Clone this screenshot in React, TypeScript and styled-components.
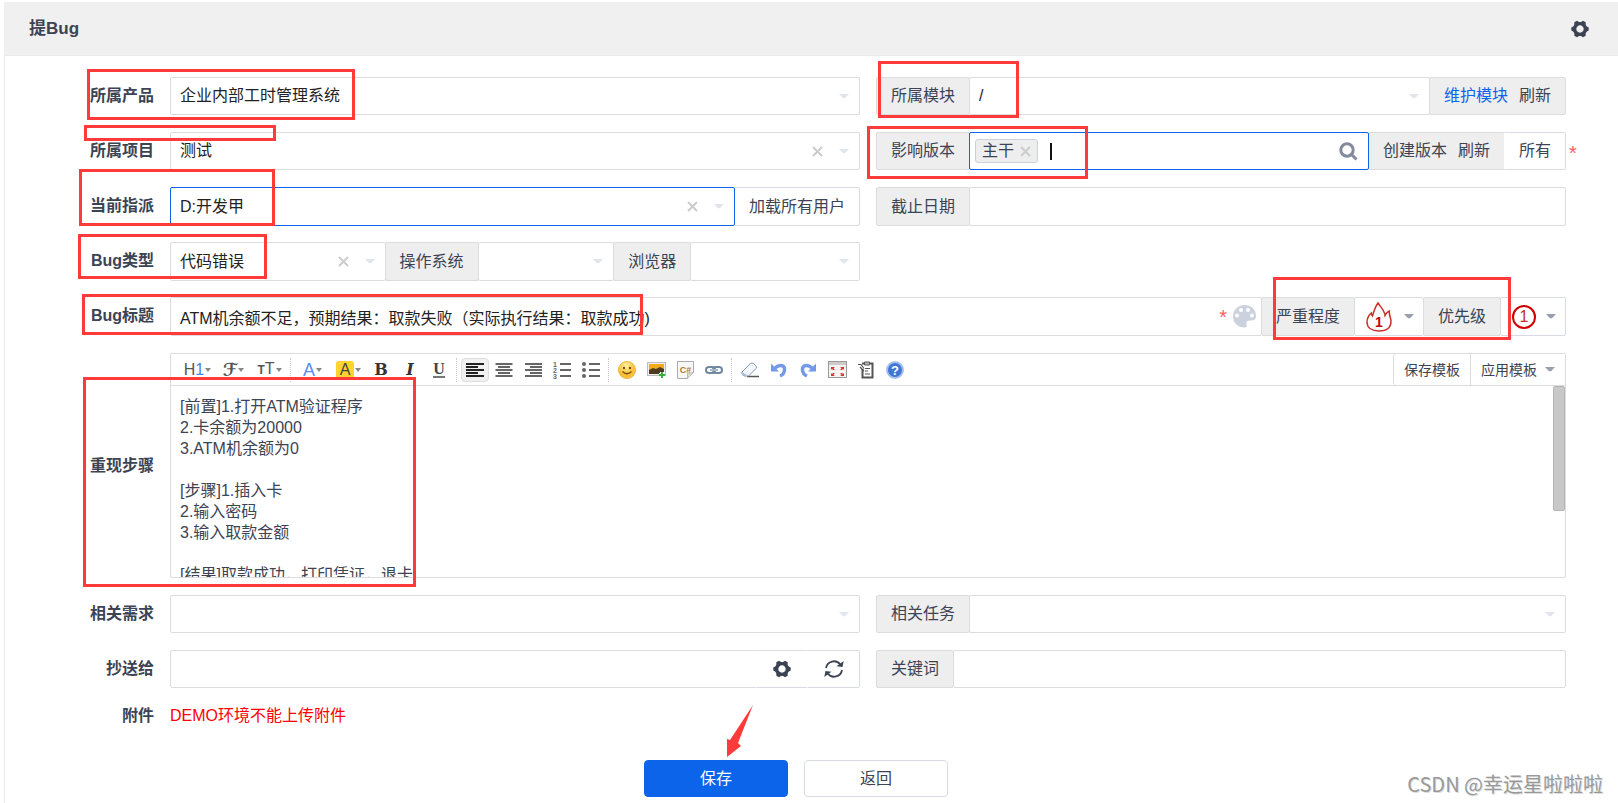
import React from "react";
import styled, { createGlobalStyle, css } from "styled-components";

const ink = "#3c4353";
const line = "#dcdcdc";
const blue = "#0c64eb";
const annotation = "#ff3a3a";

const GlobalStyle = createGlobalStyle`
  *, *::before, *::after { box-sizing: border-box; }
  body {
    margin: 0;
    background: #fff;
    color: ${ink};
    font-family: "Liberation Sans", "Noto Sans CJK SC", sans-serif;
    font-size: 16px;
    line-height: 20px;
  }
  button, input, select, textarea { font: inherit; color: inherit; margin: 0; }
  svg { display: block; flex: none; }
`;

const Page = styled.div`
  position: relative;
  min-height: 100vh;
  padding: 2px 0 0 4px;
  overflow: hidden;
`;

const Header = styled.header`
  display: flex;
  align-items: center;
  justify-content: space-between;
  height: 54px;
  padding: 0 29px 0 25px;
  background: #f0f0f0;
  border-bottom: 1px solid #ebebeb;
`;

const Title = styled.h1`
  margin: 0;
  font-size: 17px;
  line-height: 20px;
  font-weight: 700;
`;

const IconButton = styled.button`
  display: flex;
  align-items: center;
  justify-content: center;
  padding: 0;
  border: 0;
  background: none;
  cursor: pointer;
`;

const Form = styled.form`
  min-height: calc(100vh - 56px);
  padding: 21px 52px 0 21px;
  border-left: 1px solid #ebebeb;
`;

const Row = styled.div<{ $center?: boolean; $editor?: boolean }>`
  display: grid;
  grid-template-columns: 128px minmax(0, 1fr) minmax(0, 1fr);
  column-gap: 16px;
  align-items: ${(p) => (p.$center ? "center" : "start")};
  min-height: 55px;
  ${(p) => p.$editor && css`padding: 1px 0 17px;`}
`;

const Label = styled.label<{ $compact?: boolean }>`
  font-weight: 700;
  line-height: ${(p) => (p.$compact ? 22 : 38)}px;
  text-align: right;
`;

const Group = styled.div<{ $wide?: boolean; $tall?: boolean }>`
  position: relative;
  display: flex;
  height: ${(p) => (p.$tall ? 39 : 38)}px;
  ${(p) => p.$wide && css`grid-column: span 2;`}
  > * + * { margin-left: -1px; }
`;

const Control = styled.div<{ $focus?: boolean; $grow?: number }>`
  position: relative;
  z-index: ${(p) => (p.$focus ? 1 : 0)};
  display: flex;
  align-items: center;
  flex: ${(p) => p.$grow ?? 1} 1 0;
  min-width: 0;
  padding-right: 10px;
  border: 1px solid ${(p) => (p.$focus ? blue : line)};
  border-radius: 2px;
  background: #fff;
`;

const Select = styled.select`
  appearance: none;
  flex: 1;
  min-width: 0;
  height: 100%;
  padding: 0 0 0 9px;
  border: 0;
  outline: 0;
  background: none;
  color: #222;
`;

const TextInput = styled.input`
  flex: 1;
  min-width: 0;
  height: 100%;
  padding: 0 9px;
  border: 0;
  outline: 0;
  background: none;
  color: #222;
`;

const Addon = styled.div`
  display: flex;
  align-items: center;
  justify-content: center;
  gap: 11px;
  flex: none;
  padding: 0 14px;
  border: 1px solid ${line};
  border-radius: 2px;
  background: #eee;
  white-space: nowrap;
`;

const Link = styled.a<{ $primary?: boolean }>`
  color: ${(p) => (p.$primary ? blue : ink)};
  text-decoration: none;
`;

const GroupButton = styled.button<{ $width?: number; $joined?: boolean }>`
  display: flex;
  align-items: center;
  justify-content: center;
  flex: none;
  ${(p) => p.$width && css`width: ${p.$width}px;`}
  padding: 0 14px;
  border: 1px solid #d8dbe4;
  border-radius: 2px;
  background: #fff;
  white-space: nowrap;
  cursor: pointer;
  ${(p) => p.$joined && css`
    position: relative;
    z-index: 1;
    border-left-color: #fff;
    border-radius: 0 2px 2px 0;
  `}
`;

const BareButton = styled(GroupButton)`
  padding: 0;
`;

const LevelButton = styled(GroupButton)`
  justify-content: space-between;
  padding: 0 9px 0 11px;
`;

const Clear = styled(IconButton)`
  margin-right: 16px;
`;

const Tag = styled.span`
  display: flex;
  align-items: center;
  gap: 6px;
  height: 24px;
  margin-left: 5px;
  padding: 0 6px;
  border: 1px solid #cbd0db;
  border-radius: 3px;
  background: #eee;
  color: ${ink};
`;

const Caret = styled.span`
  width: 2px;
  height: 17px;
  margin-left: 12px;
  background: #111;
`;

const Star = styled.span`
  color: #ff5d5d;
  font-size: 20px;
  line-height: 20px;
`;

const OuterStar = styled(Star)`
  position: absolute;
  left: 100%;
  top: 11px;
  margin-left: 3px;
`;

const PaletteButton = styled(IconButton)`
  margin-left: 6px;
  margin-right: -5px;
`;

const Priority = styled.span`
  width: 24px;
  height: 24px;
  border: 2px solid #d00000;
  border-radius: 50%;
  color: #c9302c;
  line-height: 20px;
  text-align: center;
`;

const Editor = styled.div`
  position: relative;
  grid-column: span 2;
  border: 1px solid ${line};
  border-radius: 2px;
`;

const Toolbar = styled.div`
  display: flex;
  align-items: center;
  height: 32px;
  padding-left: 9px;
  border-bottom: 1px solid ${line};
`;

const ToolGroup = styled.div`
  display: flex;
  gap: 1px;
  & + & {
    margin-left: 3px;
    padding-left: 4px;
    border-left: 1px dotted #ccc;
  }
`;

const Tool = styled.button<{ $menu?: boolean; $on?: boolean }>`
  display: flex;
  align-items: center;
  justify-content: center;
  gap: 1px;
  width: ${(p) => (p.$menu ? 35 : 28)}px;
  height: 24px;
  padding: 0;
  border: 1px solid ${(p) => (p.$on ? "#ddd" : "transparent")};
  border-radius: 4px;
  background: ${(p) => (p.$on ? "#f0f0f0" : "none")};
  color: #555;
`;

const Glyph = styled.span<{ $kind?: "blue" | "mark" | "bold" | "italic" | "under" | "script" }>`
  line-height: 18px;
  ${(p) => p.$kind === "blue" && css`color: #5b8def; font-size: 18px;`}
  ${(p) => p.$kind === "mark" && css`width: 18px; border-radius: 3px; background: #ffd42e; color: #444;`}
  ${(p) => p.$kind === "script" && css`font: italic 700 18px/18px "DejaVu Serif", "DejaVu Sans", serif;`}
  ${(p) => p.$kind === "bold" && css`font: 700 16px/18px "DejaVu Serif", serif; color: #333;`}
  ${(p) => p.$kind === "italic" && css`font: italic 700 16px/18px "DejaVu Serif", serif; color: #333;`}
  ${(p) => p.$kind === "under" && css`font: 700 16px/14px "Liberation Serif", serif; color: #444; border-bottom: 2px solid #777;`}
`;

const Small = styled.span`
  font-size: 12px;
  font-weight: 700;
`;

const Blue = styled.span`
  color: #4a83e8;
`;

const Templates = styled.div`
  display: flex;
  align-self: stretch;
  margin-left: auto;
`;

const TemplateButton = styled.button`
  display: flex;
  align-items: center;
  gap: 8px;
  padding: 0 10px;
  border: 0;
  border-left: 1px solid #d8dbe4;
  border-radius: 3px 0 0 3px;
  background: #fff;
  font-size: 14px;
  & + & { border-radius: 0; }
`;

const Steps = styled.textarea`
  display: block;
  width: 100%;
  height: 191px;
  padding: 10px 9px 0;
  border: 0;
  outline: 0;
  resize: none;
  overflow: hidden;
  background: none;
  line-height: 21px;
`;

const ScrollThumb = styled.div`
  position: absolute;
  top: 32px;
  right: 0;
  width: 12px;
  height: 125px;
  border: 1px solid #b5b5b5;
  border-radius: 2px;
  background: #c8c8c8;
`;

const Notice = styled.span`
  grid-column: span 2;
  color: #f00;
  line-height: 22px;
`;

const Actions = styled.div`
  display: flex;
  justify-content: center;
  gap: 16px;
`;

const ActionButton = styled.button<{ $primary?: boolean }>`
  width: 144px;
  height: 37px;
  border: 1px solid ${(p) => (p.$primary ? blue : "#d8dbe4")};
  border-radius: 4px;
  background: ${(p) => (p.$primary ? blue : "#fff")};
  color: ${(p) => (p.$primary ? "#fff" : ink)};
`;

const Highlight = styled.div<{ $x: number; $y: number; $w: number; $h: number }>`
  position: absolute;
  z-index: 3;
  left: ${(p) => p.$x}px;
  top: ${(p) => p.$y}px;
  width: ${(p) => p.$w}px;
  height: ${(p) => p.$h}px;
  border: 3px solid ${annotation};
  pointer-events: none;
`;

const Pointer = styled.svg`
  position: absolute;
  z-index: 3;
  left: 727px;
  top: 705px;
`;

const Watermark = styled.div`
  position: absolute;
  right: 15px;
  bottom: 6px;
  color: #999;
  font-family: "Noto Sans CJK SC", sans-serif;
  font-size: 20px;
  line-height: 26px;
  text-shadow: 1px 1px 0 #ddd;
`;

const Down = ({ color = "#e1e5ec" }: { color?: string }) => (
  <svg width="10" height="5" viewBox="0 0 10 5" fill={color}><path d="M0 0h10L6 4.2H4z" /></svg>
);

const MiniDown = () => (
  <svg width="6" height="4" viewBox="0 0 6 4" fill="#888"><path d="M0 0h6L3 4z" /></svg>
);

const Cross = ({ size = 11 }: { size?: number }) => (
  <svg width={size} height={size} viewBox="0 0 11 11" stroke="#ccc" strokeWidth="2"><path d="M1 1l9 9M10 1l-9 9" /></svg>
);

const Gear = () => (
  <svg width="18" height="18" viewBox="-9 -9 18 18">
    <circle r="5.4" fill="none" stroke={ink} strokeWidth="3.4" />
    {[0, 60, 120, 180, 240, 300].map((a) => (
      <path key={a} d="M5 -3.4L8.7 -1.6V1.6L5 3.4z" fill={ink} transform={`rotate(${a})`} />
    ))}
  </svg>
);

const Refresh = () => (
  <svg width="22" height="20" viewBox="0 0 22 20" fill="none" stroke={ink} strokeWidth="1.8">
    <path d="M3 9A8 8 0 0 1 17.3 5.5M19 11A8 8 0 0 1 4.7 14.5" />
    <path d="M13.5 7.2L19.5 8L20.7 2z M8.5 12.8L2.5 12L1.3 18z" fill={ink} stroke="none" />
  </svg>
);

const SearchIcon = () => (
  <svg width="19" height="19" viewBox="0 0 19 19" fill="none" stroke="#838a9d" strokeWidth="3">
    <circle cx="8" cy="8" r="6.2" /><path d="M12.5 12.5l5 5" />
  </svg>
);

const Palette = () => (
  <svg width="23" height="23" viewBox="0 0 23 23">
    <path d="M11.5 0C5 0 0 5 0 11.5S5 22.5 11.5 22.5c2 0 2.6-1 2.2-2.5-.5-2-.8-3.8 1.6-4.3 3-.6 7.7.8 7.7-4.7C23 4.500 18 0 11.500 0z" fill="#ccd1de" />
    <g fill="#fff"><circle cx="4" cy="10.500" r="2" /><circle cx="8" cy="5" r="2" /><circle cx="15" cy="5" r="2" /><circle cx="19" cy="10.500" r="2" /></g>
  </svg>
);

const Fire = () => (
  <svg width="26" height="30" viewBox="0 0 26 30" fill="none" stroke="#c9302c" strokeWidth="1.500">
    <path d="M12 1C9 5 8 9 6.500 14C5.500 13 5.500 12 5.300 11C2 14 1 17 1 20C1 26 6 29 13 29S25 26 25 19C25 16 23 14 23.300 9C20.500 10 20 12 19 13.500C18.500 8 14.500 5 12 1z" />
    <text x="13" y="25" textAnchor="middle" fill="#c00" stroke="none" fontSize="14" fontWeight="700">1</text>
  </svg>
);

const Lines = ({ kind }: { kind: "left" | "center" | "right" }) => (
  <svg width="18" height="14" viewBox="0 0 18 14" fill={kind === "left" ? "#222" : "#666"}>
    {[18, 12, 18, 12, 18].map((full, i) => {
      const w = kind === "left" ? full : Math.min(full, 17);
      const x = kind === "left" ? 0 : kind === "right" ? 18 - w : (18 - w) / 2;
      return <rect key={i} x={x} y={i * 3} width={w} height="2" />;
    })}
  </svg>
);

const ListIcon = ({ ordered }: { ordered?: boolean }) => (
  <svg width="18" height="18" viewBox="0 0 18 18" fill="#666">
    {[2, 8, 14].map((y, i) => (
      <g key={y}>
        {ordered
          ? <text x="0" y={y + 4} fontSize="7" fontWeight="700">{i + 1}</text>
          : <circle cx="2" cy={y + 1} r="2" />}
        <rect x="7" y={y} width="11" height="2" />
      </g>
    ))}
  </svg>
);

const Smiley = () => (
  <svg width="18" height="18" viewBox="0 0 18 18">
    <defs><radialGradient id="sun" cx=".45" cy=".25"><stop offset="0" stopColor="#fff3a0" /><stop offset="1" stopColor="#f8bf35" /></radialGradient></defs>
    <circle cx="9" cy="9" r="8.500" fill="url(#sun)" stroke="#eeb540" />
    <g fill="#754c10"><circle cx="6" cy="7" r="1.200" /><circle cx="12" cy="7" r="1.200" /></g>
    <path d="M4.500 10.500Q9 15 13.500 10.500" fill="none" stroke="#754c10" strokeWidth="1.200" />
  </svg>
);

const Picture = () => (
  <svg width="19" height="18" viewBox="0 0 19 18">
    <rect x=".5" y="1.500" width="18" height="13" fill="#eee" stroke="#bbb" />
    <rect x="2" y="3" width="15" height="10" fill="#f5a91c" />
    <path d="M2 9l4-2 3 1 4-2 4 2v5H2z" fill="#4d3b21" />
    <path d="M12 14h6M15 11v6" stroke="#fff" strokeWidth="4" />
    <path d="M12 14h6M15 11v6" stroke="#38b13c" strokeWidth="2" />
  </svg>
);

const Code = () => (
  <svg width="17" height="18" viewBox="0 0 17 18">
    <path d="M.5.5h16v11l-6 6H.5z" fill="#f7f7f7" stroke="#aaa" />
    <path d="M10.500 17.500v-5l6-1z" fill="#ddd" stroke="#bbb" />
    <text x="8.500" y="12" textAnchor="middle" fontSize="9" fontWeight="700" fill="#b07a3c">C#</text>
  </svg>
);

const Chain = () => (
  <svg width="18" height="10" viewBox="0 0 18 10" fill="none">
    <g stroke="#71879f" strokeWidth="2"><rect x="1" y="2" width="9" height="6" rx="3" /><rect x="8" y="2" width="9" height="6" rx="3" /></g>
    <path d="M5 5h8" stroke="#a8bad0" strokeWidth="2" />
  </svg>
);

const Eraser = () => (
  <svg width="18" height="16" viewBox="0 0 18 16">
    <path d="M6 14.500h12" stroke="#555" strokeWidth="1.500" />
    <path d="M1 10L9.500 1.500Q11 .5 12.500 1.500L15 4Q16 5 15 6.500L7.500 14H3Q0 12.500 1 10z" fill="#f5f8fc" stroke="#8499b5" />
    <path d="M1 10l6.500 4H3Q0 12.500 1 10z" fill="#aabddb" />
  </svg>
);

const Turn = ({ flip }: { flip?: boolean }) => (
  <svg width="16" height="16" viewBox="0 0 16 16">
    <g transform={flip ? "matrix(-1 0 0 1 16 0)" : undefined}>
      <path d="M4 6C9 1.500 14 3.500 13.500 8C13.300 11 11.500 13 9 14" fill="none" stroke="#739ae8" strokeWidth="3.500" />
      <path d="M0 1.500V9.500H8z" fill="#739ae8" />
    </g>
  </svg>
);

const FullScreen = () => (
  <svg width="19" height="17" viewBox="0 0 19 17">
    <rect x=".5" y=".5" width="18" height="16" fill="#f6f3f3" stroke="#999" />
    <path d="M1 2.500h17" stroke="#ccc" strokeWidth="3" />
    <g fill="#d23a3a"><path d="M3 6l4 0-1.500 1.200L7 9H5L4 8 3 9zM16 6h-4l1.500 1.200L12 9h2l1-1 1 1zM3 15h4l-1.500-1.200L7 12H5l-1 1-1-1zM16 15h-4l1.500-1.200L12 12h2l1 1 1-1z" /></g>
  </svg>
);

const Clipboard = () => (
  <svg width="18" height="18" viewBox="0 0 18 18" fill="none" stroke="#555">
    <path d="M5 2.500h10.500v14H5.500V8" strokeWidth="2" />
    <path d="M7.500 1h5v3h-5z" fill="#bbb" />
    <path d="M8 7.500h5M8 10h3M8 13h5M1 3.500h3l3 4M3 6l4 4" strokeWidth="1.200" />
  </svg>
);

const Help = () => (
  <svg width="18" height="18" viewBox="0 0 18 18">
    <circle cx="9" cy="9" r="8" fill="#3f76d8" stroke="#a9c1ea" strokeWidth="2" />
    <text x="9" y="14" textAnchor="middle" fontSize="13" fontWeight="700" fill="#fff">?</text>
  </svg>
);

interface PickerProps {
  id: string;
  value?: string;
  clearable?: boolean;
  focus?: boolean;
  grow?: number;
}

const Picker = ({ id, value = "", clearable, focus, grow }: PickerProps) => (
  <Control $focus={focus} $grow={grow}>
    <Select id={id} defaultValue={value}>
      <option value={value}>{value}</option>
    </Select>
    {clearable && <Clear type="button" aria-label="清除"><Cross /></Clear>}
    <Down />
  </Control>
);

const steps = `[前置]1.打开ATM验证程序
2.卡余额为20000
3.ATM机余额为0

[步骤]1.插入卡
2.输入密码
3.输入取款金额

[结果]取款成功，打印凭证，退卡`;

const highlights = [
  [87, 69, 268, 51],
  [84, 125, 192, 16],
  [79, 169, 196, 57],
  [78, 234, 189, 45],
  [82, 294, 561, 41],
  [878, 61, 141, 57],
  [867, 126, 221, 53],
  [1273, 277, 238, 63],
  [83, 377, 333, 210],
];

export default function App() {
  return (
    <Page>
      <GlobalStyle />
      <Header>
        <Title>提Bug</Title>
        <IconButton type="button" aria-label="设置"><Gear /></IconButton>
      </Header>

      <Form onSubmit={(e: React.FormEvent) => e.preventDefault()}>
        <Row>
          <Label htmlFor="product">所属产品</Label>
          <Group><Picker id="product" value="企业内部工时管理系统" /></Group>
          <Group>
            <Addon as="label" htmlFor="module">所属模块</Addon>
            <Picker id="module" value="/" />
            <Addon><Link href="#module" $primary>维护模块</Link><Link href="#reload">刷新</Link></Addon>
          </Group>
        </Row>

        <Row>
          <Label htmlFor="project">所属项目</Label>
          <Group><Picker id="project" value="测试" clearable /></Group>
          <Group>
            <Addon as="label" htmlFor="build">影响版本</Addon>
            <Control $focus>
              <Tag>主干<IconButton type="button" aria-label="移除"><Cross /></IconButton></Tag>
              <Caret />
              <TextInput id="build" />
              <SearchIcon />
            </Control>
            <Addon><Link href="#create">创建版本</Link><Link href="#reload">刷新</Link></Addon>
            <GroupButton type="button" $joined>所有</GroupButton>
            <OuterStar>*</OuterStar>
          </Group>
        </Row>

        <Row>
          <Label htmlFor="assigned">当前指派</Label>
          <Group $tall>
            <Picker id="assigned" value="D:开发甲" clearable focus />
            <GroupButton type="button">加载所有用户</GroupButton>
          </Group>
          <Group $tall>
            <Addon as="label" htmlFor="deadline">截止日期</Addon>
            <Control><TextInput id="deadline" /></Control>
          </Group>
        </Row>

        <Row>
          <Label htmlFor="type">Bug类型</Label>
          <Group $tall>
            <Picker id="type" value="代码错误" clearable grow={204} />
            <Addon as="label" htmlFor="os">操作系统</Addon>
            <Picker id="os" grow={125} />
            <Addon as="label" htmlFor="browser">浏览器</Addon>
            <Picker id="browser" grow={158} />
          </Group>
        </Row>

        <Row>
          <Label htmlFor="title">Bug标题</Label>
          <Group $wide $tall>
            <Control>
              <TextInput id="title" defaultValue="ATM机余额不足，预期结果：取款失败（实际执行结果：取款成功)" />
              <Star>*</Star>
              <PaletteButton type="button" aria-label="颜色"><Palette /></PaletteButton>
            </Control>
            <Addon>严重程度</Addon>
            <LevelButton type="button" $width={70} aria-label="严重程度 1"><Fire /><Down color="#9a9fad" /></LevelButton>
            <Addon>优先级</Addon>
            <LevelButton type="button" $width={66} aria-label="优先级 1"><Priority>1</Priority><Down color="#9a9fad" /></LevelButton>
          </Group>
        </Row>

        <Row $center $editor>
          <Label htmlFor="steps">重现步骤</Label>
          <Editor>
            <Toolbar>
              <ToolGroup>
                <Tool type="button" $menu><Glyph>H<Blue>1</Blue></Glyph><MiniDown /></Tool>
                <Tool type="button" $menu><Glyph $kind="script">ℱ</Glyph><MiniDown /></Tool>
                <Tool type="button" $menu><Glyph><Small>T</Small>T</Glyph><MiniDown /></Tool>
              </ToolGroup>
              <ToolGroup>
                <Tool type="button" $menu><Glyph $kind="blue">A</Glyph><MiniDown /></Tool>
                <Tool type="button" $menu><Glyph $kind="mark">A</Glyph><MiniDown /></Tool>
                <Tool type="button"><Glyph $kind="bold">B</Glyph></Tool>
                <Tool type="button"><Glyph $kind="italic">I</Glyph></Tool>
                <Tool type="button"><Glyph $kind="under">U</Glyph></Tool>
              </ToolGroup>
              <ToolGroup>
                <Tool type="button" aria-label="左对齐" $on><Lines kind="left" /></Tool>
                <Tool type="button" aria-label="居中"><Lines kind="center" /></Tool>
                <Tool type="button" aria-label="右对齐"><Lines kind="right" /></Tool>
                <Tool type="button" aria-label="编号"><ListIcon ordered /></Tool>
                <Tool type="button" aria-label="项目符号"><ListIcon /></Tool>
              </ToolGroup>
              <ToolGroup>
                <Tool type="button" aria-label="表情"><Smiley /></Tool>
                <Tool type="button" aria-label="图片"><Picture /></Tool>
                <Tool type="button" aria-label="代码"><Code /></Tool>
                <Tool type="button" aria-label="链接"><Chain /></Tool>
              </ToolGroup>
              <ToolGroup>
                <Tool type="button" aria-label="清除格式"><Eraser /></Tool>
                <Tool type="button" aria-label="撤销"><Turn /></Tool>
                <Tool type="button" aria-label="重做"><Turn flip /></Tool>
                <Tool type="button" aria-label="全屏"><FullScreen /></Tool>
                <Tool type="button" aria-label="源码"><Clipboard /></Tool>
                <Tool type="button" aria-label="帮助"><Help /></Tool>
              </ToolGroup>
              <Templates>
                <TemplateButton type="button">保存模板</TemplateButton>
                <TemplateButton type="button">应用模板<Down color="#9a9fad" /></TemplateButton>
              </Templates>
            </Toolbar>
            <Steps id="steps" defaultValue={steps} />
            <ScrollThumb />
          </Editor>
        </Row>

        <Row>
          <Label htmlFor="story">相关需求</Label>
          <Group><Picker id="story" /></Group>
          <Group>
            <Addon as="label" htmlFor="task">相关任务</Addon>
            <Picker id="task" />
          </Group>
        </Row>

        <Row>
          <Label htmlFor="mailto">抄送给</Label>
          <Group>
            <Control><TextInput id="mailto" /></Control>
            <BareButton type="button" $width={53} $joined aria-label="联系人设置"><Gear /></BareButton>
            <BareButton type="button" $width={53} $joined aria-label="刷新"><Refresh /></BareButton>
          </Group>
          <Group>
            <Addon as="label" htmlFor="keywords">关键词</Addon>
            <Control><TextInput id="keywords" /></Control>
          </Group>
        </Row>

        <Row>
          <Label as="span" $compact>附件</Label>
          <Notice>DEMO环境不能上传附件</Notice>
        </Row>

        <Actions>
          <ActionButton type="submit" $primary>保存</ActionButton>
          <ActionButton type="button">返回</ActionButton>
        </Actions>
      </Form>

      {highlights.map(([x, y, w, h]) => (
        <Highlight key={`${x}-${y}`} $x={x} $y={y} $w={w} $h={h} />
      ))}
      <Pointer width="26" height="52" viewBox="0 0 26 52" fill={annotation}>
        <path d="M26 0L11 38L14 41L0 52V34L3 35z" />
      </Pointer>
      <Watermark>CSDN @幸运星啦啦啦</Watermark>
    </Page>
  );
}
